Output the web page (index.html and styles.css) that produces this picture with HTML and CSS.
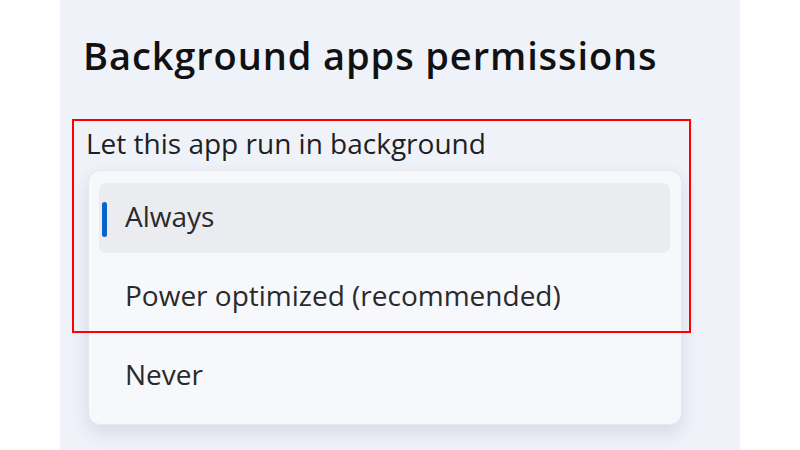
FILE: index.html
```html
<!DOCTYPE html>
<html>
<head>
<meta charset="utf-8">
<link rel="stylesheet" href="styles.css">
</head>
<body>
<div class="page">
  <div class="panel">
    <h1 class="title">Background apps permissions</h1>
    <div class="label">Let this app run in background</div>
    <div class="menu">
      <div class="item selected"><span class="indicator"></span>Always</div>
      <div class="item">Power optimized (recommended)</div>
      <div class="item">Never</div>
    </div>
  </div>
  <div class="highlight"></div>
</div>
</body>
</html>
```

FILE: styles.css
```css
html, body {
  margin: 0;
  padding: 0;
  background: #ffffff;
}
.page {
  position: relative;
  width: 800px;
  height: 450px;
  overflow: hidden;
  font-family: "Open Sans", "Noto Sans", sans-serif;
}
.panel {
  margin-left: 60px;
  width: 680px;
  height: 450px;
  box-sizing: border-box;
  background: #eff2f9;
  padding: 30px 0 0 23px;
}
.title {
  margin: 0;
  font-size: 38px;
  font-weight: 600;
  letter-spacing: 0.9px;
  color: #111111;
  line-height: 50px;
}
.label {
  margin-top: 47px;
  margin-left: 3px;
  font-size: 28px;
  color: #1f1f1f;
  line-height: 32px;
}
.menu {
  margin-top: 11px;
  margin-left: 5px;
  width: 594px;
  height: 255px;
  box-sizing: border-box;
  background: #f7f8fb;
  border: 1px solid #e6e8ee;
  border-radius: 12px;
  box-shadow: 0 8px 18px rgba(40, 50, 80, 0.12);
  padding: 12px 11px 0 10px;
  display: flex;
  flex-direction: column;
  gap: 9px;
}
.item {
  position: relative;
  height: 70px;
  box-sizing: border-box;
  display: flex;
  align-items: center;
  padding: 0 0 4px 26px;
  font-size: 28px;
  color: #2a2a2a;
  border-radius: 7px;
}
.item.selected {
  background: #ebecf0;
}
.indicator {
  position: absolute;
  left: 3px;
  top: 19px;
  width: 5px;
  height: 35px;
  border-radius: 3px;
  background: #0a63c9;
}
.highlight {
  position: absolute;
  left: 72px;
  top: 119px;
  width: 619px;
  height: 214px;
  box-sizing: border-box;
  border: 2px solid #ff0000;
}
```
